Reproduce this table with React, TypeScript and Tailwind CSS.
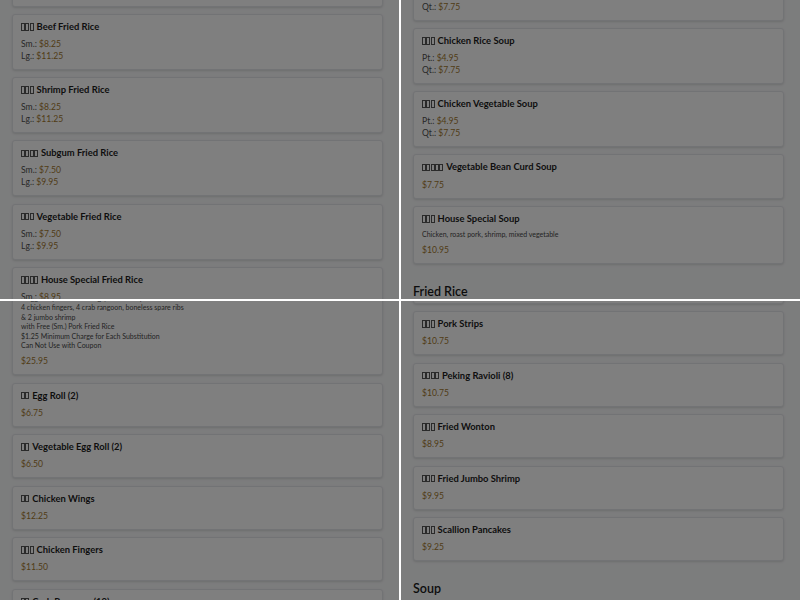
type Price = { label?: string; value: string };
type Item = { tofu: number; name: string; desc?: string[]; prices: Price[] };

const font = { fontFamily: "Lato, 'Noto Sans', 'Liberation Sans', sans-serif" };

/** Missing-glyph boxes where the Chinese names would be */
function Tofu({ n }: { n: number }) {
  return (
    <span className="inline-flex items-center gap-[0.3px] mr-[3px] align-[-1px]">
      {Array.from({ length: n }).map((_, i) => (
        <span key={i} className="inline-block w-[4px] h-[7.5px] border border-[#555]" />
      ))}
    </span>
  );
}

function Card({ item }: { item: Item }) {
  const single = !item.desc && item.prices.length === 1;
  return (
    <div className="rounded-[3px] border border-gray-200 bg-white px-2 pt-[6px] pb-[7px] shadow-sm">
      <div className="flex items-center text-[9.4px] leading-[12px] font-bold text-[#1c1c1c] whitespace-nowrap">
        <Tofu n={item.tofu} />
        {item.name}
      </div>
      {item.desc && (
        <div className="mt-[5.5px] text-[7px] leading-[9.5px] text-[#484848]">
          {item.desc.map((d) => (
            <div key={d} className="whitespace-nowrap">{d}</div>
          ))}
        </div>
      )}
      <div className={item.desc ? "mt-[4.6px]" : single ? "mt-[5.25px]" : "mt-[5px]"}>
        {item.prices.map((p) => (
          <div key={p.label ?? p.value} className="text-[8.6px] leading-[12px] whitespace-nowrap">
            {p.label && <span className="text-[#505050]">{p.label} </span>}
            <span className="text-[#a2782e]">{p.value}</span>
          </div>
        ))}
      </div>
    </div>
  );
}

function Section({ title, items }: { title?: string; items: Item[] }) {
  return (
    <div className="flex flex-col">
      {title && (
        <h2 className="mt-5 mb-3 text-[12.5px] leading-[16px] font-semibold text-[#1a1a1a]">{title}</h2>
      )}
      <div className="flex flex-col gap-[7.25px]">
        {items.map((it) => (
          <Card key={it.name} item={it} />
        ))}
      </div>
    </div>
  );
}

/** One screenshot tile: page scrolled to a given offset, dimmed by a modal backdrop */
function Panel({ offset, children }: { offset: string; children: React.ReactNode }) {
  return (
    <div className="relative overflow-hidden bg-gray-50">
      <div className={`pl-3 pr-4 ${offset}`}>{children}</div>
      <div className="absolute inset-0 bg-black/50" />
    </div>
  );
}

const sp = (s: string, l: string): Price[] => [
  { label: "Sm.:", value: s },
  { label: "Lg.:", value: l },
];
const pq = (p: string, q: string): Price[] => [
  { label: "Pt.:", value: p },
  { label: "Qt.:", value: q },
];

const friedRice: Item[] = [
  { tofu: 3, name: "Pork Fried Rice", prices: sp("$7.95", "$10.95") },
  { tofu: 3, name: "Beef Fried Rice", prices: sp("$8.25", "$11.25") },
  { tofu: 3, name: "Shrimp Fried Rice", prices: sp("$8.25", "$11.25") },
  { tofu: 4, name: "Subgum Fried Rice", prices: sp("$7.50", "$9.95") },
  { tofu: 3, name: "Vegetable Fried Rice", prices: sp("$7.50", "$9.95") },
  { tofu: 4, name: "House Special Fried Rice", prices: sp("$8.95", "$12.25") },
];

const soup: Item[] = [
  { tofu: 3, name: "Wonton Soup", prices: pq("$4.95", "$7.75") },
  { tofu: 3, name: "Chicken Rice Soup", prices: pq("$4.95", "$7.75") },
  { tofu: 3, name: "Chicken Vegetable Soup", prices: pq("$4.95", "$7.75") },
  { tofu: 5, name: "Vegetable Bean Curd Soup", prices: [{ value: "$7.75" }] },
  {
    tofu: 3,
    name: "House Special Soup",
    desc: ["Chicken, roast pork, shrimp, mixed vegetable"],
    prices: [{ value: "$10.95" }],
  },
];

const appetizersA: Item[] = [
  {
    tofu: 3,
    name: "Pu Pu Platter (for 2)",
    desc: [
      "2 egg rolls, 4 chicken wings, 4 beef teriyaki",
      "4 chicken fingers, 4 crab rangoon, boneless spare ribs",
      "& 2 jumbo shrimp",
      "with Free (Sm.) Pork Fried Rice",
      "$1.25 Minimum Charge for Each Substitution",
      "Can Not Use with Coupon",
    ],
    prices: [{ value: "$25.95" }],
  },
  { tofu: 2, name: "Egg Roll (2)", prices: [{ value: "$6.75" }] },
  { tofu: 2, name: "Vegetable Egg Roll (2)", prices: [{ value: "$6.50" }] },
  { tofu: 2, name: "Chicken Wings", prices: [{ value: "$12.25" }] },
  { tofu: 3, name: "Chicken Fingers", prices: [{ value: "$11.50" }] },
  { tofu: 2, name: "Crab Rangoon (10)", prices: [{ value: "$8.75" }] },
];

const appetizersB: Item[] = [
  { tofu: 4, name: "Boneless Spare Ribs", prices: [{ value: "$11.25" }] },
  { tofu: 3, name: "Pork Strips", prices: [{ value: "$10.75" }] },
  { tofu: 4, name: "Peking Ravioli (8)", prices: [{ value: "$10.75" }] },
  { tofu: 3, name: "Fried Wonton", prices: [{ value: "$8.95" }] },
  { tofu: 3, name: "Fried Jumbo Shrimp", prices: [{ value: "$9.95" }] },
  { tofu: 3, name: "Scallion Pancakes", prices: [{ value: "$9.25" }] },
];

export default function App() {
  return (
    <div
      className="grid h-[600px] w-[800px] grid-cols-2 grid-rows-2 gap-[2px] bg-white"
      style={font}
    >
      <Panel offset="-mt-[49.4px]">
        <Section items={friedRice} />
      </Panel>
      <Panel offset="-mt-[35.5px]">
        <Section items={soup} />
        <Section title="Fried Rice" items={friedRice.slice(0, 2)} />
      </Panel>
      <Panel offset="-mt-[31.8px]">
        <Section items={appetizersA} />
      </Panel>
      <Panel offset="-mt-[41.5px]">
        <Section items={appetizersB} />
        <Section title="Soup" items={soup.slice(0, 2)} />
      </Panel>
    </div>
  );
}
